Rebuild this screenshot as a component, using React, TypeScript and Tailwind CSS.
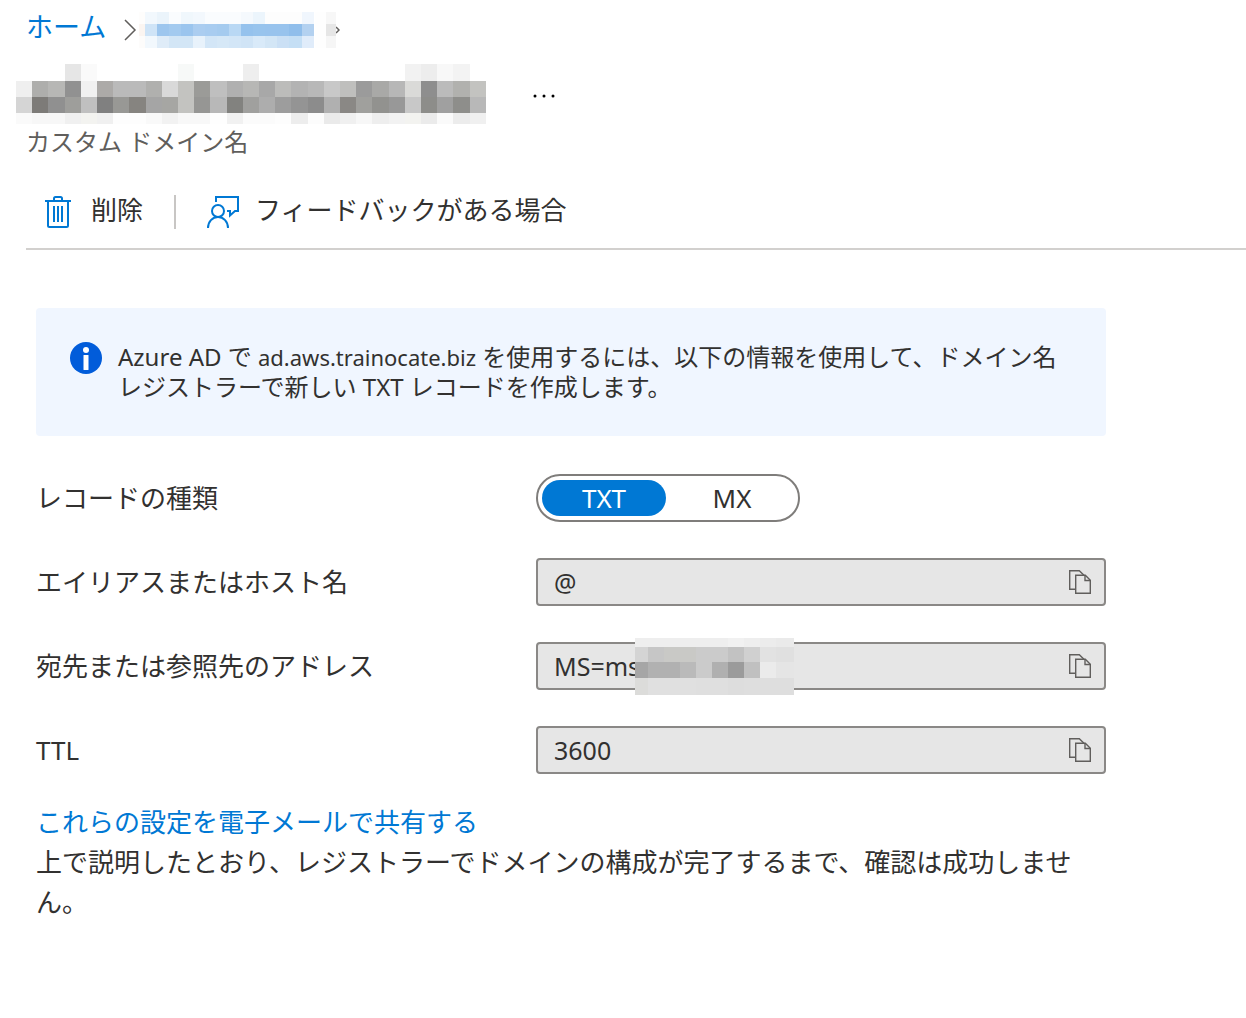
import { useState } from "react";

type Cell = string | null;

/** Pixelated block that hides private text. */
function Mosaic({
  xs,
  ys,
  rows,
  className,
}: {
  xs: number[];
  ys: number[];
  rows: Cell[][];
  className?: string;
}) {
  const width = xs[xs.length - 1];
  const height = ys[ys.length - 1];
  return (
    <svg
      className={className}
      width={width}
      height={height}
      viewBox={`0 0 ${width} ${height}`}
      shapeRendering="crispEdges"
      aria-hidden="true"
    >
      {rows.map((row, r) =>
        row.map((fill, c) =>
          fill ? (
            <rect
              key={`${r}-${c}`}
              x={xs[c]}
              y={ys[r]}
              width={xs[c + 1] - xs[c]}
              height={ys[r + 1] - ys[r]}
              fill={`#${fill}`}
            />
          ) : null
        )
      )}
    </svg>
  );
}

const steps = (count: number, size: number) =>
  Array.from({ length: count + 1 }, (_, i) => Math.round(i * size));

const parse = (text: string): Cell[] =>
  text.split(" ").map((v) => (v === "-" ? null : v.length === 2 ? v + v + v : v));

const crumbRows = [
  "fefdfc f2f8fd ebf4fb fafcfe f0f7fc f3f8fd fafcfe fafcfe fafcfe f5f9fd ecf5fc fd fd fd f0f6fd - fe f7",
  "fbf5f1 cfe4f7 9dc6ee a3caef 9bc5ee abcdf0 a8ccf0 a5cbef b9d8f4 95c2ed 98c4ed 98c3ed 98c3ed 90beeb b3d1f0 - fe e6",
  "fdfcfb f2f8fd dfecf8 d3e6f6 d3e6f6 e8f2fb d3e6f7 d6e8f7 d3e6f7 d0e4f6 d9eaf9 d3e6f6 cbe0f5 c5dff5 e0ecfa - fe f6",
].map(parse);
const crumbXs = [0, 6, 18, 30, 42, 54, 66, 78, 90, 102, 114, 126, 138, 150, 163, 175, 176, 187, 197];

const titleRows = [
  "- - - e6 fa - - - - - f7f9f8 - - - ee - - - - - - - - - f2 ed f8 f3 -",
  "ef aeaeac b7b7b5 91 f1 acaaa8 ba ba b0b0ae d9 c3c3c0 9b9b98 bf b0 b7b7b5 a8 bcbcba b3 b8 c8 bfbfbd 9b a9a9a7 b7 dadad8 8e bb b1b1ae c3c3c0",
  "d5 7d7b78 90 9e9e9b c0 80 989895 868480 a5 a6a6a3 c3c3c0 969694 b8 82827f a0a09e ad 9d 94 8c b0 8a8885 a0a09d 92928f 98 c8 8d8d8a a0 8e8e8b b8",
  "fa f7 f7 f0 f3f3f0 f0 fd fd f9 f2 f8 f8 fe f1 fb fb fd ed fc ea f0 f7 ee f2 f3f3f0 eb fa ec f0",
].map(parse);

const valueRows = [
  "ee ee ee ee ee ee f1 ee ec ea",
  "d4 c6 c9c9c6 c9c9c6 cb cb c2 d0 e2 e0",
  "a6 b1 b1 ba cb b0 9b c0 eb e5",
  "dcdcda e0 e0 e0 df df dd de de de",
].map(parse);

function TrashIcon() {
  return (
    <svg width="26" height="32" viewBox="0 0 26 32" fill="none" stroke="#0078d4" strokeWidth="2" aria-hidden="true">
      <path d="M0 5h26M9 5V2.500Q9 1 10.500 1h5Q17 1 17 2.500V5M3 5v24.500Q3 31 4.500 31h17Q23 31 23 29.500V5M9 10v16M13 10v16M17 10v16" />
    </svg>
  );
}

function FeedbackIcon() {
  return (
    <svg width="32" height="32" viewBox="0 0 32 32" fill="none" stroke="#0078d4" strokeWidth="2" aria-hidden="true">
      <path d="M9 6V1h22v14h-3l-5 4.500V15h-3" />
      <circle cx="11" cy="15" r="6" />
      <path d="M1 32c0-6.500 4.500-11 10-11s10 4.500 10 11" />
    </svg>
  );
}

function CopyIcon() {
  return (
    <svg width="22" height="24" viewBox="0 0 22 24" fill="none" stroke="#605e5c" strokeWidth="1.400" aria-hidden="true">
      <path d="M6.500 19.300H.700V.700h9.600l4.700 4.600" />
      <path d="M6.700 5.300h9.600l5 5v13H6.700z" />
      <path d="M16 5.300v5.200h5.300" />
    </svg>
  );
}

function CopyField({ id, label, value, masked }: { id: string; label: string; value: string; masked?: boolean }) {
  return (
    <div className="flex items-center">
      <label htmlFor={id} className="w-[500px] shrink-0">
        {label}
      </label>
      <div className="relative flex h-12 flex-1 items-center rounded-sm border-2 border-[#8a8886] bg-[#e6e6e6] pr-[13px]">
        <input
          id={id}
          readOnly
          value={value}
          className="h-full min-w-0 flex-1 bg-transparent pl-4 text-[25px] outline-none"
        />
        <button type="button" aria-label={`${label} をコピー`} className="cursor-pointer">
          <CopyIcon />
        </button>
        {masked && (
          <Mosaic
            className="absolute -top-1.5 left-[97px]"
            xs={[0, 13, 29, 45, 61, 77, 93, 109, 125, 141, 159]}
            ys={[0, 9, 24, 40, 57]}
            rows={valueRows}
          />
        )}
      </div>
    </div>
  );
}

export default function App() {
  const [kind, setKind] = useState("TXT");

  return (
    <div className="min-h-screen bg-white pb-24 font-['Noto_Sans','Noto_Sans_CJK_JP',sans-serif] text-[26px] leading-10 text-[#323130]">
      <header className="pl-[26px]">
        <nav aria-label="階層リンク" className="flex h-[60px] items-center">
          <a href="#home" className="-mt-1.5 text-[27px] text-[#0078d4]">
            ホーム
          </a>
          <svg className="ml-4 shrink-0" width="17" height="22" viewBox="0 0 17 22" fill="none" stroke="#605e5c" strokeWidth="1.500" aria-hidden="true">
            <path d="M3 1l10 10L3 21" />
          </svg>
          <Mosaic className="shrink-0" xs={crumbXs} ys={[0, 12, 24, 36]} rows={crumbRows} />
          <svg className="shrink-0" width="4" height="8" viewBox="0 0 4 8" fill="none" stroke="#605e5c" strokeWidth="1.500" aria-hidden="true">
            <path d="M0 1l3 3-3 3" />
          </svg>
        </nav>
        <div className="-ml-2.5 flex items-center pt-1">
          <Mosaic xs={steps(29, 16.2)} ys={[0, 17, 33, 49, 60]} rows={titleRows} />
          <button type="button" aria-label="その他" className="ml-[46px] cursor-pointer pt-1 text-black">
            <svg width="24" height="4" viewBox="0 0 24 4" fill="currentColor" aria-hidden="true">
              <circle cx="3" cy="2" r="1.500" />
              <circle cx="12" cy="2" r="1.500" />
              <circle cx="21" cy="2" r="1.500" />
            </svg>
          </button>
        </div>
        <p className="text-2xl leading-9 text-[#605e5c]">カスタム ドメイン名</p>
        <div role="toolbar" className="mt-4 flex h-[74px] items-center border-b-2 border-[#d2d0ce] pl-[19px]">
          <button type="button" className="flex cursor-pointer items-center gap-5">
            <TrashIcon />
            <span className="pb-1">削除</span>
          </button>
          <span className="mx-[31px] h-[34px] w-0.5 bg-[#c8c6c4]" />
          <button type="button" className="flex cursor-pointer items-center gap-4">
            <FeedbackIcon />
            <span className="pb-1">フィードバックがある場合</span>
          </button>
        </div>
      </header>

      <main className="mx-9 max-w-[1070px] pt-[58px]">
        <div role="note" className="flex gap-4 rounded-sm bg-[#f0f6ff] px-[34px] py-[34px] text-2xl leading-[30px]">
          <svg className="shrink-0" width="32" height="32" viewBox="0 0 32 32" aria-hidden="true">
            <circle cx="16" cy="16" r="16" fill="#015cda" />
            <circle cx="16" cy="8" r="3" fill="#fff" />
            <rect x="13.500" y="13" width="5" height="15" rx="0.500" fill="#fff" />
          </svg>
          <p>
            Azure AD で <span className="text-[22px]">ad.aws.trainocate.biz</span>{" "}
            を使用するには、以下の情報を使用して、ドメイン名
            <br />
            レジストラーで新しい TXT レコードを作成します。
          </p>
        </div>

        <div className="mt-[38px] flex flex-col gap-9">
          <fieldset className="flex items-center">
            <legend className="float-left w-[500px] shrink-0">レコードの種類</legend>
            <div className="flex h-12 w-[264px] gap-1 rounded-full border-2 border-[#7f7d7b] py-1 pr-1 pl-1">
              {["TXT", "MX"].map((name) => (
                <label
                  key={name}
                  className="flex w-[124px] shrink-0 cursor-pointer items-center justify-center rounded-full has-checked:bg-[#0078d4] has-checked:text-white"
                >
                  <input
                    type="radio"
                    name="record"
                    className="sr-only"
                    checked={kind === name}
                    onChange={() => setKind(name)}
                  />
                  {name}
                </label>
              ))}
            </div>
          </fieldset>
          <CopyField id="alias" label="エイリアスまたはホスト名" value="@" />
          <CopyField id="address" label="宛先または参照先のアドレス" value="MS=ms" masked />
          <CopyField id="ttl" label="TTL" value="3600" />
        </div>

        <div className="mt-7">
          <a href="#share" className="text-[#0078d4]">
            これらの設定を電子メールで共有する
          </a>
          <p>上で説明したとおり、レジストラーでドメインの構成が完了するまで、確認は成功しません。</p>
        </div>
      </main>
    </div>
  );
}
